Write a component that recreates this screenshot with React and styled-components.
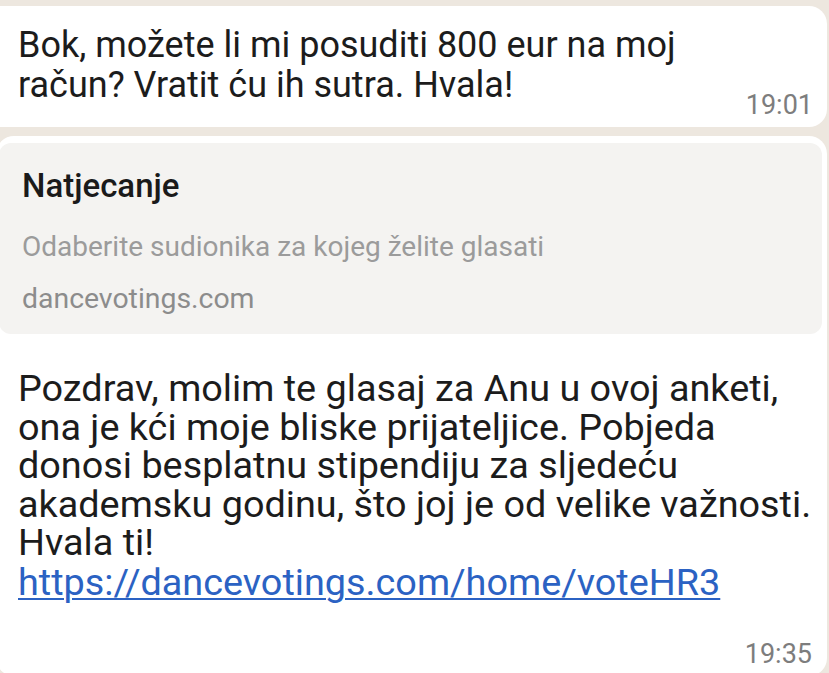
import styled, { createGlobalStyle } from 'styled-components'

const GlobalStyle = createGlobalStyle`
    html, body {
        margin: 0;
        padding: 0;
        background: #ede7df;
    }
    body {
        font-family: Roboto, "Liberation Sans", sans-serif;
        overflow: hidden;
    }
`

const Chat = styled.div`
    width: 829px;
    height: 673px;
    display: flex;
    flex-direction: column;
    gap: 9px;
    padding: 6px 2px 0 0;
    box-sizing: border-box;
    background: #ede7df;
    overflow: hidden;
`

const Bubble = styled.div`
    background: #fff;
    border-radius: 18px;
    margin-left: ${props => props.$shift || '0'};
    padding: ${props => props.$pad || '0'};
    display: flex;
    flex-direction: column;
    flex-shrink: 0;
`

const MessageText = styled.div`
    font-size: ${props => props.$size}px;
    line-height: ${props => props.$lh}px;
    color: #1c1c1c;
    white-space: pre-line;
    padding-left: ${props => props.$indent || '18px'};
    margin-top: ${props => props.$top || '0'};
`

const Time = styled.div`
    align-self: flex-end;
    font-size: 27px;
    line-height: 27px;
    color: #7d7d7d;
    margin-right: ${props => props.$right || '14px'};
    margin-top: ${props => props.$top || '0'};
`

const Preview = styled.div`
    background: #f4f3f1;
    border-radius: 12px;
    margin: 7px 5px 0 3px;
    padding: 25px 19px 19px 23px;
    display: flex;
    flex-direction: column;
`

const PreviewTitle = styled.div`
    font-size: 33px;
    font-weight: 500;
    color: #1a1a1a;
    line-height: 36px;
`

const PreviewDesc = styled.div`
    font-size: 28px;
    color: #9b9b9b;
    line-height: 32px;
    margin-top: 27px;
`

const PreviewHost = styled.div`
    font-size: 28.4px;
    color: #8c8c8c;
    line-height: 32px;
    margin-top: 20px;
`

const Link = styled.a`
    display: block;
    width: fit-content;
    margin-top: 1px;
    color: #2b62c3;
    text-decoration: underline;
    text-decoration-thickness: 2px;
    text-underline-offset: 3px;
`

export default function App() {
    return (
        <Chat>
            <GlobalStyle />
            <Bubble $shift="-16px" $pad="19px 0 8px">
                <MessageText $size={36} $lh={40} $indent="34px">
                    {'Bok, možete li mi posuditi 800 eur na moj\nračun? Vratit ću ih sutra. Hvala!'}
                </MessageText>
                <Time $top="-13px">19:01</Time>
            </Bubble>
            <Bubble $shift="-4px" $pad="0 0 8px">
                <Preview>
                    <PreviewTitle>Natjecanje</PreviewTitle>
                    <PreviewDesc>Odaberite sudionika za kojeg želite glasati</PreviewDesc>
                    <PreviewHost>dancevotings.com</PreviewHost>
                </Preview>
                <MessageText $size={37.8} $lh={38.6} $indent="22px" $top="35px">
                    {'Pozdrav, molim te glasaj za Anu u ovoj anketi,\nona je kći moje bliske prijateljice. Pobjeda\ndonosi besplatnu stipendiju za sljedeću\nakademsku godinu, što joj je od velike važnosti.\nHvala ti!'}
                    <Link href="#">https://dancevotings.com/home/voteHR3</Link>
                </MessageText>
                <Time $top="39px" $right="15px">19:35</Time>
            </Bubble>
        </Chat>
    )
}
